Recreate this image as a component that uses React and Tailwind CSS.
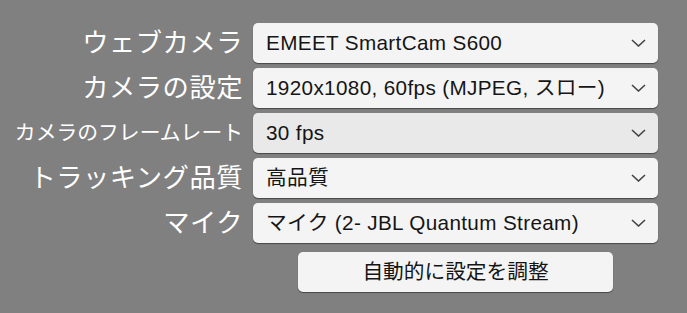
import React from 'react';

const font = { fontFamily: '"Liberation Sans", "Noto Sans CJK JP", sans-serif' };

const rows = [
    { label: 'ウェブカメラ', value: 'EMEET SmartCam S600', small: false },
    { label: 'カメラの設定', value: '1920x1080, 60fps (MJPEG, スロー)', small: false },
    { label: 'カメラのフレームレート', value: '30 fps', small: true, hover: true },
    { label: 'トラッキング品質', value: '高品質', small: false },
    { label: 'マイク', value: 'マイク (2- JBL Quantum Stream)', small: false },
];

const Chevron = () => (
    <svg width="15" height="8" viewBox="0 0 15 8" fill="none" className="shrink-0">
        <path d="M1 1L7.5 7L14 1" stroke="#444" strokeWidth="1.6" />
    </svg>
);

const App = () => {
    return (
        <div className="w-[687px] h-[313px] bg-[#808080] pt-[23px]" style={font}>
            <div className="flex flex-col gap-[5px]">
                {rows.map(r => (
                    <div key={r.label} className="flex items-center h-10">
                        <div className={`w-[243px] text-right text-white leading-none whitespace-nowrap ${r.small ? 'text-[20.8px]' : 'text-[26.3px] tracking-[0.5px]'}`}>
                            {r.label}
                        </div>
                        <div className={`ml-[10px] w-[405px] h-10 rounded-[5px] flex items-center justify-between pl-[13px] pr-[12px] shadow-[0_1px_1px_rgba(0,0,0,0.45)] ${r.hover ? 'bg-[#e9e9e9]' : 'bg-[#f4f4f4]'}`}>
                            <span className="text-[20.7px] tracking-[0.35px] text-[#151515] whitespace-nowrap">{r.value}</span>
                            <Chevron />
                        </div>
                    </div>
                ))}
            </div>
            <div className="flex mt-[9px]">
                <button className="ml-[298px] w-[315px] h-10 rounded-[5px] bg-[#f4f4f4] text-[20.7px] text-[#151515] shadow-[0_1px_1px_rgba(0,0,0,0.45)]">
                    自動的に設定を調整
                </button>
            </div>
        </div>
    );
};

export default App;
